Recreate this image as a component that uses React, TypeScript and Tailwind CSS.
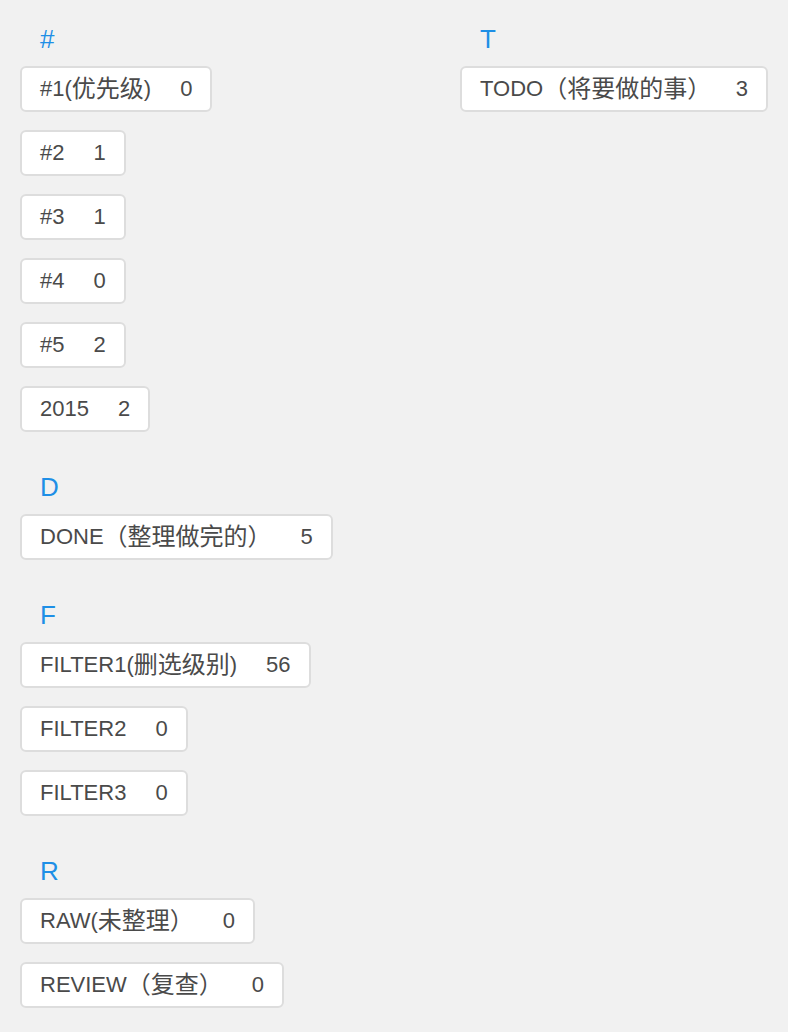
type Tag = { label: string; count: number }
type Group = { letter: string; tags: Tag[] }

const leftGroups: Group[] = [
  {
    letter: '#',
    tags: [
      { label: '#1(优先级)', count: 0 },
      { label: '#2', count: 1 },
      { label: '#3', count: 1 },
      { label: '#4', count: 0 },
      { label: '#5', count: 2 },
      { label: '2015', count: 2 },
    ],
  },
  { letter: 'D', tags: [{ label: 'DONE（整理做完的）', count: 5 }] },
  {
    letter: 'F',
    tags: [
      { label: 'FILTER1(删选级别)', count: 56 },
      { label: 'FILTER2', count: 0 },
      { label: 'FILTER3', count: 0 },
    ],
  },
  {
    letter: 'R',
    tags: [
      { label: 'RAW(未整理）', count: 0 },
      { label: 'REVIEW（复查）', count: 0 },
    ],
  },
]

const rightGroups: Group[] = [
  { letter: 'T', tags: [{ label: 'TODO（将要做的事）', count: 3 }] },
]

// CJK runs render a touch larger than the latin text in the original
const Label = ({ text }: { text: string }) => {
  const parts = text.split(/([\u3000-\u9fff\uff00-\uffef]+)/).filter(Boolean)
  return (
    <span className="flex items-center">
      {parts.map((p, i) =>
        /[\u3000-\u9fff\uff00-\uffef]/.test(p) ? (
          <span key={i} className="text-[24px]">
            {p}
          </span>
        ) : (
          <span key={i}>{p}</span>
        ),
      )}
    </span>
  )
}

const TagGroup = ({ group }: { group: Group }) => {
  return (
    <div className="flex flex-col">
      <h3 className="mb-[14px] pl-[20px] text-[26px] leading-[26px] text-[#1e8fe6]">
        {group.letter}
      </h3>
      <div className="flex flex-col gap-[18px]">
        {group.tags.map((t) => (
          <div
            key={t.label}
            className="flex h-[46px] w-fit items-center rounded-[6px] border-2 border-[#dddddd] bg-white px-[18px] text-[22px] leading-none text-[#4a4a4a]"
          >
            <Label text={t.label} />
            <span className="ml-[29px]">{t.count}</span>
          </div>
        ))}
      </div>
    </div>
  )
}

export default function App() {
  return (
    <div className="min-h-screen bg-[#f1f1f1] px-[20px] pt-[26px] font-['Liberation_Sans','Noto_Sans_CJK_SC',sans-serif]">
      <div className="flex">
        <div className="flex w-[440px] flex-col gap-[42px]">
          {leftGroups.map((g) => (
            <TagGroup key={g.letter} group={g} />
          ))}
        </div>
        <div className="flex flex-1 flex-col gap-[42px]">
          {rightGroups.map((g) => (
            <TagGroup key={g.letter} group={g} />
          ))}
        </div>
      </div>
    </div>
  )
}
